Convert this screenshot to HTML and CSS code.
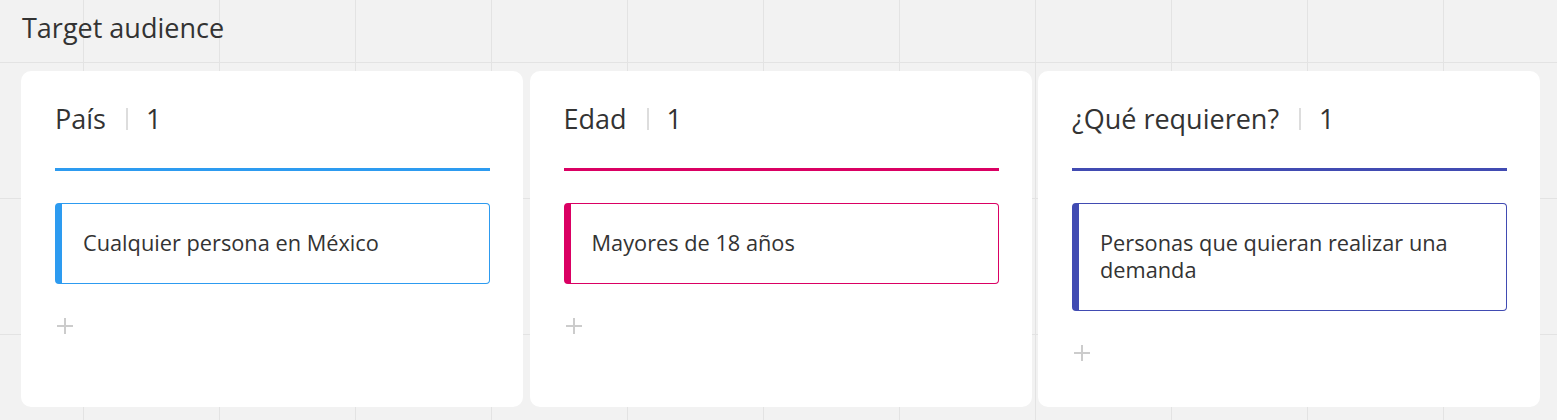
FILE: index.html
```html
<!DOCTYPE html>
<html lang="es">
<head>
<meta charset="utf-8">
<title>Target audience</title>
<link rel="stylesheet" href="styles.css">
</head>
<body>
<div class="board">
  <h1 class="title">Target audience</h1>
  <div class="columns">
    <section class="column col-blue">
      <header class="col-head">
        <span class="col-name">País</span>
        <span class="sep"></span>
        <span class="col-count">1</span>
      </header>
      <div class="item">Cualquier persona en México</div>
      <div class="add">
        <svg viewBox="0 0 18 18" width="18" height="18"><path d="M9 1v16M1 9h16" stroke="#cccccc" stroke-width="2" fill="none"/></svg>
      </div>
    </section>
    <section class="column col-pink">
      <header class="col-head">
        <span class="col-name">Edad</span>
        <span class="sep"></span>
        <span class="col-count">1</span>
      </header>
      <div class="item">Mayores de 18 años</div>
      <div class="add">
        <svg viewBox="0 0 18 18" width="18" height="18"><path d="M9 1v16M1 9h16" stroke="#cccccc" stroke-width="2" fill="none"/></svg>
      </div>
    </section>
    <section class="column col-indigo">
      <header class="col-head">
        <span class="col-name">¿Qué requieren?</span>
        <span class="sep"></span>
        <span class="col-count">1</span>
      </header>
      <div class="item">Personas que quieran realizar una demanda</div>
      <div class="add">
        <svg viewBox="0 0 18 18" width="18" height="18"><path d="M9 1v16M1 9h16" stroke="#cccccc" stroke-width="2" fill="none"/></svg>
      </div>
    </section>
  </div>
</div>
</body>
</html>
```

FILE: styles.css
```css
* { box-sizing: border-box; }

html, body {
  margin: 0;
  padding: 0;
}

body {
  width: 1557px;
  height: 420px;
  overflow: hidden;
  font-family: "Open Sans", "Noto Sans", sans-serif;
  color: #333333;
  background-color: #f2f2f2;
  background-image:
    linear-gradient(to right, #e3e3e3 1px, transparent 1px),
    linear-gradient(to bottom, #e3e3e3 1px, transparent 1px);
  background-size: 136px 136px;
  background-position: 83px 62px;
}

.board {
  padding-top: 10px;
}

.title {
  margin: 0 0 25px 0;
  padding-left: 22px;
  font-size: 27px;
  line-height: 36px;
  font-weight: 400;
  color: #333333;
}

.columns {
  display: grid;
  grid-template-columns: 502px 502px 502px;
  column-gap: 6.5px;
  padding-left: 21px;
}

.column {
  height: 336px;
  background: #ffffff;
  border-radius: 10px;
  padding: 31px 33px 0 34px;
}

.col-head {
  display: flex;
  align-items: center;
  height: 69px;
  padding-bottom: 33px;
  border-bottom: 3px solid var(--accent);
  font-size: 27px;
  line-height: 36px;
  color: #333333;
}

.sep {
  width: 2px;
  height: 22px;
  background: #dddddd;
  margin: 0 18px 0 20px;
}

.item {
  margin-top: 32px;
  border: 1px solid var(--accent);
  border-left: 7px solid var(--accent);
  border-radius: 4px;
  padding: 25px 20px 27px 21px;
  font-size: 21.75px;
  line-height: 27px;
  color: #333333;
}

.add {
  margin-top: 33px;
  padding-left: 1px;
  height: 18px;
  display: flex;
}

.col-blue { --accent: #2d9bf0; }
.col-pink { --accent: #da0063; }
.col-indigo { --accent: #414bb2; }
```
